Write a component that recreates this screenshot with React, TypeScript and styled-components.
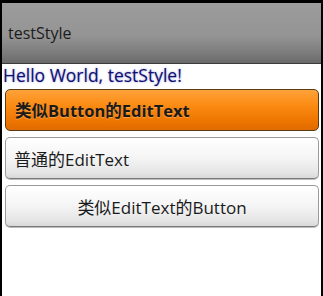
import styled, { createGlobalStyle, css } from 'styled-components';

const GlobalStyle = createGlobalStyle`
  html, body {
    margin: 0;
    padding: 0;
    background: #000;
  }
  body {
    font-family: 'Open Sans', 'Noto Sans CJK SC', sans-serif;
  }
`;

const Screen = styled.div`
  width: 323px;
  height: 296px;
  box-sizing: border-box;
  padding: 3px 2px 0 2px;
  background: #000;
  display: flex;
  flex-direction: column;
`;

const TitleBar = styled.div`
  height: 61px;
  box-sizing: border-box;
  display: flex;
  align-items: center;
  padding-left: 6px;
  background: linear-gradient(#9c9c9c 0%, #949494 55%, #7a7a7a 85%, #6a6a6a 100%);
  border-bottom: 1px solid #3c3c3c;
  font-size: 16px;
  color: #1c1c1c;
`;

const Content = styled.div`
  flex: 1;
  background: #fff;
  display: flex;
  flex-direction: column;
  padding: 0 2px 0 3px;
`;

const Hello = styled.div`
  color: #10106e;
  font-size: 17.5px;
  line-height: 22px;
  margin-left: -2px;
  text-shadow: 0 0 2px rgba(60, 60, 200, 0.6);
`;

const field = css`
  height: 42px;
  box-sizing: border-box;
  border-radius: 5px;
  display: flex;
  align-items: center;
  font-size: 17px;
  color: #1a1a1a;
`;

const OrangeEdit = styled.div`
  ${field}
  margin-top: 3px;
  padding-left: 9px;
  font-size: 16.5px;
  font-weight: 700;
  border: 1px solid #5a3c14;
  background: linear-gradient(#ffa23a 0%, #fb8a12 40%, #ec7400 80%, #e06a00 100%);
  text-shadow: 0 1px 1px rgba(255, 190, 120, 0.6);
`;

const GrayBox = styled.div<{ $center?: boolean }>`
  ${field}
  margin-top: 6px;
  padding-left: ${(p) => (p.$center ? '0' : '8px')};
  justify-content: ${(p) => (p.$center ? 'center' : 'flex-start')};
  border: 1px solid #9a9a9a;
  border-bottom-color: #7a7a7a;
  background: linear-gradient(#ffffff 0%, #f6f6f6 45%, #e6e6e6 85%, #d8d8d8 100%);
  box-shadow: 0 1px 0 #bcbcbc;
`;

export default function App() {
  return (
    <>
      <GlobalStyle />
      <Screen>
        <TitleBar>testStyle</TitleBar>
        <Content>
          <Hello>Hello World, testStyle!</Hello>
          <OrangeEdit>类似Button的EditText</OrangeEdit>
          <GrayBox>普通的EditText</GrayBox>
          <GrayBox $center>类似EditText的Button</GrayBox>
        </Content>
      </Screen>
    </>
  );
}
